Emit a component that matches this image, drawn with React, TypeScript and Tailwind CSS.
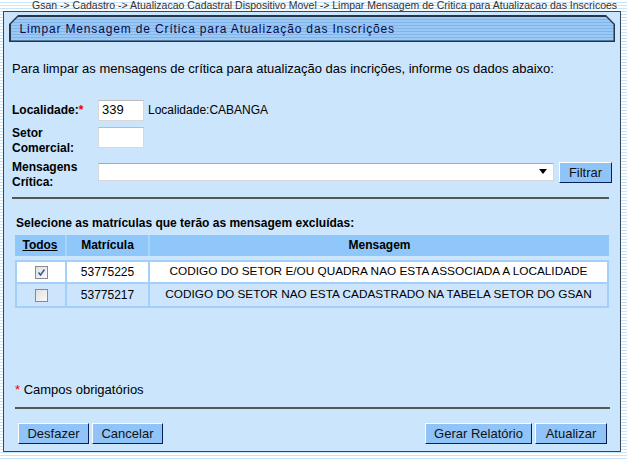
import React from "react";

const stripes =
  "bg-[repeating-linear-gradient(to_bottom,#ffffff_0px,#ffffff_2px,#c9e3f8_2px,#c9e3f8_3px)]";

type BtnProps = { label: string; className?: string };

const Btn = ({ label, className = "" }: BtnProps) => (
  <button
    className={`h-[21px] bg-[#90c4f8] border border-t-white border-l-white border-b-[#0a1f55] border-r-[#0a1f55] text-[13px] text-[#111] leading-none ${className}`}
  >
    {label}
  </button>
);

const Check = ({ checked }: { checked?: boolean }) => (
  <span className="inline-flex w-[13px] h-[13px] border border-[#8a8a8a] bg-gradient-to-br from-[#e0e0e0] to-[#fafafa] items-center justify-center align-middle">
    {checked && (
      <svg width="9" height="9" viewBox="0 0 9 9">
        <path d="M1.5 4.5 L3.5 7 L7.5 1.5" stroke="#3a5aa8" strokeWidth="1.6" fill="none" />
      </svg>
    )}
  </span>
);

const rows = [
  { mat: "53775225", msg: "CODIGO DO SETOR E/OU QUADRA NAO ESTA ASSOCIADA A LOCALIDADE", checked: true, bg: "bg-white" },
  { mat: "53775217", msg: "CODIGO DO SETOR NAO ESTA CADASTRADO NA TABELA SETOR DO GSAN", checked: false, bg: "bg-[#cce5fc]" },
];

export default function App() {
  return (
    <div
      className={`w-[627px] h-[459px] overflow-hidden ${stripes} font-['Liberation_Sans',Arial,sans-serif] text-[12px] text-black`}
    >
      <div className="h-[11px] pl-[32px] text-[10.5px] leading-[10px] text-[#333] whitespace-nowrap">
        Gsan -&gt; Cadastro -&gt; Atualizacao Cadastral Dispositivo Movel -&gt; Limpar Mensagem de Critica para Atualizacao das Inscricoes
      </div>
      <div className="ml-[3px] w-[618px] h-[441px] border-[1.5px] border-[#34485c] bg-[#cbe5fd] flex flex-col">
        <div className="mx-[5px] mt-[3px] relative h-[27px]">
          <div className="absolute inset-0 bg-[#23364a] [clip-path:polygon(9px_0,calc(100%-9px)_0,100%_9px,100%_100%,0_100%,0_9px)]" />
          <div className="absolute inset-[1.5px] bg-[repeating-linear-gradient(to_bottom,#9cc9f4_0px,#9cc9f4_2px,#7fb5ec_2px,#7fb5ec_3px)] [clip-path:polygon(8px_0,calc(100%-8px)_0,100%_8px,100%_100%,0_100%,0_8px)] flex items-center pl-[9px]">
            <span className="text-[12px] tracking-[0.85px] text-[#0a0a4a]">
              Limpar Mensagem de Crítica para Atualização das Inscrições
            </span>
          </div>
        </div>

        <div className="px-[8px]">
          <p className="mt-[17px] text-[13px]">
            Para limpar as mensagens de crítica para atualização das incrições, informe os dados abaixo:
          </p>

          <div className="mt-[21px] flex items-center">
            <span className="w-[86px] font-bold">
              Localidade:<span className="text-[#e00]">*</span>
            </span>
            <div className="w-[46px] h-[21px] bg-white border border-[#d8d8d8] border-t-[#bbb] text-[13px] pl-[3px] flex items-center">
              339
            </div>
            <span className="ml-[4px] text-[12px]">Localidade:CABANGA</span>
          </div>

          <div className="mt-[5px] flex items-start">
            <span className="w-[86px] font-bold leading-[15px]">
              Setor
              <br />
              Comercial:
            </span>
            <div className="mt-[1px] w-[46px] h-[21px] bg-white border border-[#d8d8d8] border-t-[#bbb]" />
          </div>

          <div className="mt-[4px] flex items-start">
            <span className="w-[86px] font-bold leading-[15px]">
              Mensagens
              <br />
              Crítica:
            </span>
            <div className="mt-[3px] w-[456px] h-[18px] bg-white border border-[#d8d8d8] border-t-[#aaa] flex items-center justify-end pr-[6px]">
              <svg width="8" height="5" viewBox="0 0 8 5">
                <path d="M0 0 H8 L4 5 Z" fill="#000" />
              </svg>
            </div>
            <Btn label="Filtrar" className="ml-[5px] mt-[2px] w-[53px]" />
          </div>

          <div className="mt-[7px] h-[2px] bg-[#555] mr-[3px]" />

          <p className="mt-[15px] ml-[4px] font-bold">Selecione as matrículas que terão as mensagem excluídas:</p>

          <table className="mt-[3px] ml-[3px] w-[594px] border-separate border-spacing-0 text-[12px]">
            <thead>
              <tr className="bg-[#90c7fb] h-[21px]">
                <th className="w-[52px] font-bold border-r-[2px] border-[#a9d4fc]">
                  <span className="underline">Todos</span>
                </th>
                <th className="w-[83px] font-bold border-r-[2px] border-[#a9d4fc]">Matrícula</th>
                <th className="font-bold">Mensagem</th>
              </tr>
            </thead>
            <tbody>
              <tr className="h-[4px]">
                <td colSpan={3} />
              </tr>
              {rows.map((r, i) => (
                <tr key={i} className="h-[24px]">
                  <td className={`${r.bg} text-center border-[2px] border-[#a3d0fb] ${i > 0 ? "border-t-0" : ""}`}>
                    <Check checked={r.checked} />
                  </td>
                  <td className={`${r.bg} text-center text-[12px] border-y-[2px] border-r-[2px] border-[#a3d0fb] ${i > 0 ? "border-t-0" : ""}`}>
                    {r.mat}
                  </td>
                  <td className={`${r.bg} text-center text-[11.8px] border-y-[2px] border-r-[2px] border-[#a3d0fb] ${i > 0 ? "border-t-0" : ""}`}>
                    {r.msg}
                  </td>
                </tr>
              ))}
            </tbody>
          </table>

          <p className="mt-[72px] ml-[3px] text-[13px]">
            <span className="text-[#e00]">*</span> Campos obrigatórios
          </p>

          <div className="mt-[8px] ml-[3px] h-[2px] bg-[#555] mr-[2px]" />

          <div className="mt-[14px] ml-[6px] mr-[5px] flex">
            <Btn label="Desfazer" className="w-[71px]" />
            <Btn label="Cancelar" className="ml-[3px] w-[71px]" />
            <div className="flex-1" />
            <Btn label="Gerar Relatório" className="w-[107px]" />
            <Btn label="Atualizar" className="ml-[3px] w-[72px]" />
          </div>
        </div>
      </div>
    </div>
  );
}
